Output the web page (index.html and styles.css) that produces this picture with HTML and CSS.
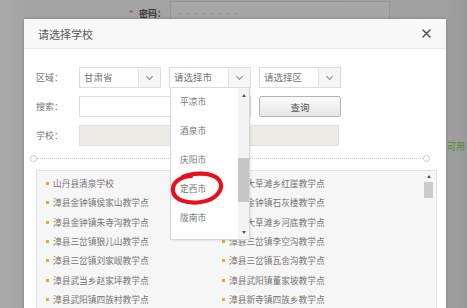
FILE: index.html
```html
<!DOCTYPE html>
<html lang="zh-CN">
<head>
  <meta charset="UTF-8" />
  <meta name="viewport" content="width=device-width, initial-scale=1.0" />
  <title>请选择学校</title>
  <link rel="stylesheet" href="styles.css">
</head>
<body>
  <!-- page behind the dialog, dimmed -->
  <div class="page">
    <div class="page-row">
      <span class="req">*</span>
      <span class="page-label">密码：</span>
      <div class="page-input">••••••••</div>
    </div>
    <div class="page-tip">可用</div>
  </div>

  <div class="modal">
    <div class="modal-head">
      <span class="modal-title">请选择学校</span>
      <svg class="close" width="9" height="9" viewBox="0 0 9 9">
        <path d="M1 1 L8 8 M8 1 L1 8" stroke="#555" stroke-width="1.6" stroke-linecap="round" />
      </svg>
    </div>

    <div class="modal-body">
      <div class="form-row">
        <label>区域：</label>
        <div class="select"><span>甘肃省</span><i class="select-btn"><b class="chev"></b></i></div>
        <div class="select"><span>请选择市</span><i class="select-btn"><b class="chev"></b></i></div>
        <div class="select"><span>请选择区</span><i class="select-btn"><b class="chev"></b></i></div>
      </div>
      <div class="form-row">
        <label>搜索：</label>
        <div class="text-input search"></div>
        <button class="btn">查询</button>
      </div>
      <div class="form-row">
        <label>学校：</label>
        <div class="text-input school"></div>
      </div>

      <div class="divider"><i class="ring"></i><span class="dots"></span><i class="ring"></i></div>

      <div class="list-box">
        <ul class="school-list">
          <li>山丹县清泉学校</li>
          <li>漳县大草滩乡红崖教学点</li>
          <li>漳县金钟镇侯家山教学点</li>
          <li>漳县金钟镇石灰楼教学点</li>
          <li>漳县金钟镇朱寺沟教学点</li>
          <li>漳县大草滩乡河底教学点</li>
          <li>漳县三岔镇狼儿山教学点</li>
          <li>漳县三岔镇李空沟教学点</li>
          <li>漳县三岔镇刘家岘教学点</li>
          <li>漳县三岔镇瓦舍沟教学点</li>
          <li>漳县武当乡赵家坪教学点</li>
          <li>漳县武阳镇董家坡教学点</li>
          <li>漳县武阳镇四族村教学点</li>
          <li>漳县新寺镇四族乡教学点</li>
        </ul>
        <div class="scrollbar list-scroll">
          <b class="up"></b>
          <span class="thumb"></span>
        </div>
      </div>
    </div>

    <div class="dropdown">
      <ul class="city-list">
        <li>平凉市</li>
        <li>酒泉市</li>
        <li>庆阳市</li>
        <li>定西市</li>
        <li>陇南市</li>
      </ul>
      <div class="scrollbar drop-scroll">
        <b class="up"></b>
        <span class="track"><span class="thumb"></span></span>
        <b class="down"></b>
      </div>
    </div>
  </div>

  <svg class="mark" width="58" height="38" viewBox="0 0 58 38">
    <path d="M15 7 C25 2 45 2 51 10 C57 18 49 30 33 32 C19 34 6 30 5 21 C4 13 11 7 23 6"
          fill="none" stroke="#e8101a" stroke-width="4.2" stroke-linecap="round" />
  </svg>
</body>
</html>
```

FILE: styles.css
```css
* {
  box-sizing: border-box;
}
body {
  margin: 0;
  width: 467px;
  height: 308px;
  overflow: hidden;
  position: relative;
  background: #a2a2a2;
  font-family: "Noto Sans CJK SC", "Noto Sans", sans-serif;
}
ul {
  list-style: none;
  margin: 0;
  padding: 0;
}

/* dimmed page */
.page {
  height: 308px;
  background: linear-gradient(to right, #a9a9a9 0, #a4a4a4 24px, #a0a0a0 446px, #999 467px);
}
.page-row {
  display: flex;
  align-items: center;
  padding: 1px 0 0 129px;
  height: 25px;
}
.req {
  color: #b03a3a;
  font-size: 9px;
  width: 10px;
}
.page-label {
  color: #3a3a3a;
  font-size: 9px;
  font-weight: bold;
  width: 31px;
}
.page-input {
  width: 220px;
  height: 24px;
  border: 1px solid #949494;
  background: #a6a6a6;
  color: #7d7d7d;
  font-size: 7px;
  letter-spacing: 1px;
  line-height: 22px;
  padding-left: 5px;
}
.page-tip {
  margin-top: 116px;
  padding-left: 447px;
  color: #4f8a22;
  font-size: 9px;
  line-height: 12px;
  white-space: nowrap;
}

/* dialog */
.modal {
  position: absolute;
  left: 24px;
  top: 19px;
  width: 422px;
  height: 300px;
  background: #fff;
  box-shadow: 0 0 3px rgba(0, 0, 0, 0.25);
}
.modal-head {
  display: flex;
  align-items: center;
  justify-content: space-between;
  height: 30px;
  padding: 0 15px 0 14px;
  background: #f8f8f8;
  border-bottom: 1px solid #e8e8e8;
}
.modal-title {
  font-size: 11px;
  color: #585858;
}
.modal-body {
  padding: 18px 12px 0;
}
.form-row {
  display: flex;
  gap: 8px;
  height: 21px;
  margin-bottom: 8px;
}
.form-row label {
  width: 35px;
  font-size: 9px;
  line-height: 21px;
  color: #747474;
}
.select {
  display: flex;
  width: 82px;
  border: 1px solid #dcdcdc;
  background: #fff;
}
.select span {
  flex: 1;
  font-size: 9.5px;
  line-height: 19px;
  padding-left: 4px;
  color: #747474;
}
.select-btn {
  display: flex;
  align-items: center;
  justify-content: center;
  width: 22px;
  background: #f6f6f6;
  border-left: 1px solid #e2e2e2;
}
.chev {
  width: 5px;
  height: 5px;
  border-right: 1px solid #8a8a8a;
  border-bottom: 1px solid #8a8a8a;
  transform: rotate(45deg);
  margin-top: -3px;
}
.text-input {
  border: 1px solid #dcdcdc;
  background: #fff;
}
.search {
  width: 172px;
}
.school {
  width: 260px;
  background: #ecebe5;
  border-color: #e2e1dc;
}
.btn {
  width: 82px;
  padding: 0;
  border: 1px solid #b5b5b5;
  border-radius: 2px;
  background: linear-gradient(#fbfbfb, #e6e6e6);
  font-family: inherit;
  font-size: 9.5px;
  color: #555;
}
.divider {
  display: flex;
  align-items: center;
  margin: 7px 4px 0 -6px;
  height: 8px;
}
.ring {
  width: 7px;
  height: 7px;
  border: 1px solid #c8c8c8;
  border-radius: 50%;
  background: #fff;
}
.dots {
  flex: 1;
  border-top: 1px dotted #c4c4c4;
}

/* school list */
.list-box {
  display: flex;
  margin-top: 8px;
  width: 401px;
  height: 140px;
  background: #f6f6f6;
  border: 1px solid #e2e2e2;
  padding: 3px 3px 0 8px;
}
.school-list {
  flex: 1;
  display: grid;
  grid-template-columns: 176px 176px;
  grid-auto-rows: 19.33px;
  font-size: 8.7px;
  line-height: 19.33px;
  color: #747474;
  white-space: nowrap;
}
.school-list li::before {
  content: "";
  display: inline-block;
  width: 3px;
  height: 3px;
  background: #f2a33a;
  margin: 0 4px 2px 1px;
  vertical-align: middle;
}
.scrollbar {
  display: flex;
  flex-direction: column;
  align-items: center;
}
.list-scroll {
  width: 9px;
}
.up,
.down {
  width: 0;
  height: 0;
  border-left: 2.5px solid transparent;
  border-right: 2.5px solid transparent;
}
.up {
  border-bottom: 3px solid #555;
}
.down {
  border-top: 3px solid #555;
}
.list-scroll .up {
  margin-top: 1px;
}
.list-scroll .thumb {
  width: 9px;
  height: 16px;
  margin-top: 4px;
  background: #cbcbcb;
}

/* city dropdown */
.dropdown {
  position: absolute;
  left: 146px;
  top: 69px;
  width: 80px;
  height: 152px;
  display: flex;
  background: #fff;
  border: 1px solid #d6d6d6;
  border-top: none;
  box-shadow: 1px 1px 2px rgba(0, 0, 0, 0.08);
}
.city-list {
  flex: 1;
  padding: 0 0 0 9px;
  margin-top: -1px;
}
.city-list li {
  height: 29px;
  line-height: 29px;
  font-size: 8.7px;
  color: #747474;
}
.drop-scroll {
  width: 11px;
  background: #f3f3f3;
}
.drop-scroll .up {
  margin: 6px 0 4px;
}
.drop-scroll .track {
  flex: 1;
  width: 100%;
}
.drop-scroll .thumb {
  display: block;
  width: 100%;
  height: 44px;
  margin-top: 57px;
  background: #c6c6c6;
}
.drop-scroll .down {
  margin: 0 0 5px;
}

/* hand drawn mark around the chosen city */
.mark {
  position: absolute;
  left: 168px;
  top: 170px;
}
```
